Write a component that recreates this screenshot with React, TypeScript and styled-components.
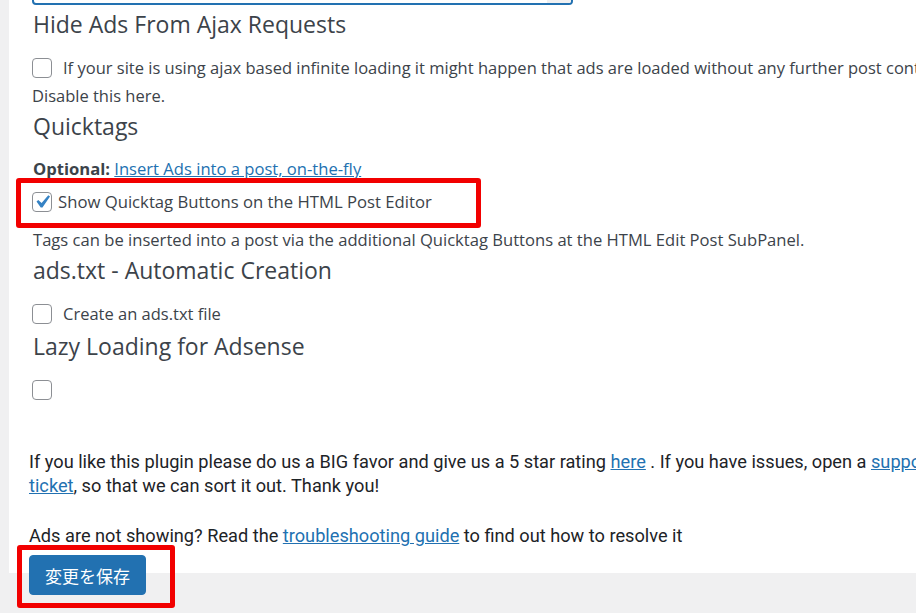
import styled, { createGlobalStyle } from 'styled-components';

const GlobalStyle = createGlobalStyle`
    html, body {
        margin: 0;
        padding: 0;
        background: #f0f0f1;
        overflow: hidden;
        width: 916px;
        height: 613px;
    }
    body {
        font-family: "Open Sans", "Noto Sans", sans-serif;
        color: #3c434a;
    }
`;

const Page = styled.div`
    padding-left: 9px;
`;

const Panel = styled.div`
    background: #fff;
    width: 1300px;
    padding: 0 0 25px 20px;
`;

const Settings = styled.div`
    padding-left: 3px;
`;

const FieldInput = styled.div`
    width: 537px;
    height: 32px;
    margin-top: -31px;
    border: 2px solid #2271b1;
    border-radius: 4px;
    display: flex;
    justify-content: flex-end;
`;

const InputAddon = styled.div`
    width: 24px;
    background: #f0f0f1;
    border-radius: 0 2px 2px 0;
`;

const Heading = styled.h2<{ $top: number }>`
    margin: ${p => p.$top}px 0 0 1px;
    font-size: 23px;
    font-weight: 400;
    line-height: 28px;
    color: #3c434a;
`;

const CheckRow = styled.label<{ $top: number; $size?: number; $gap?: number }>`
    display: block;
    position: relative;
    margin-top: ${p => p.$top}px;
    font-size: ${p => p.$size ?? 16.5}px;
    line-height: 28px;
    white-space: nowrap;
    & > span {
        margin-right: ${p => p.$gap ?? 11}px;
    }
`;

const Highlight = styled.div`
    position: relative;
    &::after {
        content: "";
        position: absolute;
        left: -16px;
        top: -10px;
        width: 455px;
        height: 40px;
        border: 5px solid #f20000;
        border-radius: 3px;
        pointer-events: none;
    }
`;

const Box = styled.span`
    display: inline-flex;
    align-items: center;
    justify-content: center;
    width: 20px;
    height: 20px;
    box-sizing: border-box;
    border: 1px solid #8c8f94;
    border-radius: 4px;
    background: #fff;
    vertical-align: middle;
    overflow: visible;
    margin-top: -3px;
    svg {
        flex: none;
        width: 26px;
        height: 26px;
    }
`;

const Note = styled.p<{ $top: number }>`
    margin: ${p => p.$top}px 0 0 1px;
    font-size: 16.6px;
    line-height: 24px;
    white-space: nowrap;
`;

const Strong = styled.b`
    font-weight: 700;
`;

const Link = styled.a`
    color: #2271b1;
    text-decoration: underline;
`;

const Footer = styled.p<{ $top: number }>`
    margin: ${p => p.$top}px 0 0 0;
    font-family: Roboto, "Liberation Sans", sans-serif;
    font-size: 18.2px;
    line-height: 24px;
    color: #1d2327;
    white-space: nowrap;
`;

const SubmitRow = styled.div`
    margin: -18px 0 0 20px;
    position: relative;
    display: flex;
    width: fit-content;
    &::after {
        content: "";
        position: absolute;
        left: -12px;
        top: -10px;
        width: 148px;
        height: 53px;
        border: 5px solid #f20000;
        border-radius: 3px;
        pointer-events: none;
    }
`;

const SaveButton = styled.button`
    width: 117px;
    height: 40px;
    background: #2271b1;
    border: 1px solid #2271b1;
    border-radius: 4px;
    color: #fff;
    font-family: "Noto Sans CJK JP", sans-serif;
    font-size: 17px;
    padding: 0;
`;

const Check = () => (
    <svg viewBox="0 0 20 20">
        <path d="M14.83 4.89l1.34.94-5.81 8.38H9.02L5.78 9.67l1.34-1.25 2.57 2.4z" fill="#3582c4" />
    </svg>
);

const App = () => {
    return (
        <Page>
            <GlobalStyle />
            <Panel>
                <Settings>
                    <FieldInput><InputAddon /></FieldInput>

                    <Heading $top={5}>Hide Ads From Ajax Requests</Heading>
                    <CheckRow $top={16}>
                        <Box />If your site is using ajax based infinite loading it might happen that ads are loaded without any further post content.
                        <br />Disable this here.
                    </CheckRow>

                    <Heading $top={2}>Quicktags</Heading>
                    <Note $top={17}>
                        <Strong>Optional:</Strong> <Link href="#">Insert Ads into a post, on-the-fly</Link>
                    </Note>
                    <Highlight>
                        <CheckRow $top={7} $size={16.7} $gap={6}>
                            <Box><Check /></Box>Show Quicktag Buttons on the HTML Post Editor
                        </CheckRow>
                    </Highlight>
                    <Note $top={12}>Tags can be inserted into a post via the additional Quicktag Buttons at the HTML Edit Post SubPanel.</Note>

                    <Heading $top={4}>ads.txt - Automatic Creation</Heading>
                    <CheckRow $top={16}>
                        <Box />Create an ads.txt file
                    </CheckRow>

                    <Heading $top={4}>Lazy Loading for Adsense</Heading>
                    <CheckRow $top={16}>
                        <Box />
                    </CheckRow>
                </Settings>

                <Footer $top={46}>
                    If you like this plugin please do us a BIG favor and give us a 5 star rating <Link href="#">here</Link> . If you have issues, open a <Link href="#">support<br />ticket</Link>, so that we can sort it out. Thank you!
                </Footer>
                <Footer $top={26}>
                    Ads are not showing? Read the <Link href="#">troubleshooting guide</Link> to find out how to resolve it
                </Footer>
            </Panel>
            <SubmitRow>
                <SaveButton>変更を保存</SaveButton>
            </SubmitRow>
        </Page>
    );
};

export default App;
